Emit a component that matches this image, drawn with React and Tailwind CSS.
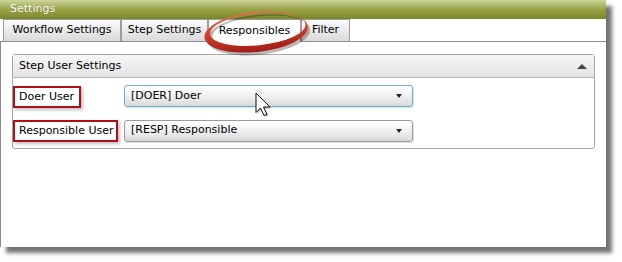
import React from 'react'

const font = { fontFamily: '"DejaVu Sans", Verdana, sans-serif' }

const Tab = ({ label, active, w }) => (
    <div
        className={`h-[22px] flex items-center justify-center border border-[#9c9c9c] border-b-0 text-[11px] text-black ${active ? 'bg-white h-[23px] -mb-px' : 'bg-gradient-to-b from-[#fbfbfb] to-[#dadada]'} ${w}`}
    >
        {label}
    </div>
)

const Select = ({ value, focused }) => (
    <div
        className={`w-[289px] h-[22px] rounded-[3px] border flex items-center justify-between pl-[6px] pr-[10px] bg-gradient-to-b from-white via-[#f1f1f1] to-[#d9d9d9] text-[11px] text-black shadow-[1px_1px_1px_rgba(0,0,0,0.12)] ${focused ? 'border-[#6aaecb]' : 'border-[#9a9aa2]'}`}
    >
        <span>{value}</span>
        <span className="w-0 h-0 border-l-[3.5px] border-r-[3.5px] border-t-[4px] border-l-transparent border-r-transparent border-t-[#222]" />
    </div>
)

const Label = ({ text, w }) => (
    <div className={`h-[22px] ${w} border-2 border-[#b00e14] flex items-center pl-[4px] text-[11px] text-black shadow-[2px_2px_3px_rgba(0,0,0,0.25)]`}>
        {text}
    </div>
)

export default function App() {
    return (
        <div className="w-[622px] h-[262px] bg-white relative overflow-hidden" style={font}>
            {/* Window */}
            <div className="w-[606px] h-[247px] bg-white flex flex-col shadow-[6px_6px_4px_rgba(0,0,0,0.55)]">
                {/* Title bar */}
                <div className="h-[19px] bg-gradient-to-b from-[#cdd59a] via-[#98a346] to-[#7b8728] text-white text-[11px] pl-[10px] flex items-center [text-shadow:0_0_1px_rgba(0,0,0,0.3)]">
                    Settings
                </div>

                {/* Tabs */}
                <div className="h-[23px] flex items-end pl-[3px] border-b border-[#8c8c94] relative z-10">
                    <Tab label="Workflow Settings" w="w-[118px]" />
                    <Tab label="Step Settings" w="w-[87px]" />
                    <Tab label="Responsibles" w="w-[93px]" active />
                    <Tab label="Filter" w="w-[49px]" />
                </div>

                {/* Content */}
                <div className="flex-1 border-l border-[#8a8a94] pt-[12px] pl-[11px] pr-[11px]">
                    <div className="border border-[#a4a4a4] rounded-[3px]">
                        <div className="h-[23px] bg-gradient-to-b from-[#f7f7f7] to-[#e3e3e3] border-b border-[#b4b4b4] flex items-center justify-between pl-[6px] pr-[7px] text-[11px] text-black">
                            <span>Step User Settings</span>
                            <span className="w-0 h-0 border-l-[5px] border-r-[5px] border-b-[5px] border-l-transparent border-r-transparent border-b-[#444]" />
                        </div>
                        <div className="flex flex-col gap-[11px] pt-[6px] pb-[6px]">
                            <div className="flex items-center">
                                <div className="w-[111px] pt-[2px]">
                                    <Label text="Doer User" w="w-[68px]" />
                                </div>
                                <Select value="[DOER] Doer" focused />
                            </div>
                            <div className="flex items-center">
                                <div className="w-[111px] pt-[1px]">
                                    <Label text="Responsible User" w="w-[105px]" />
                                </div>
                                <Select value="[RESP] Responsible" />
                            </div>
                        </div>
                    </div>
                </div>
            </div>

            {/* Red ellipse annotation */}
            <svg className="absolute left-0 top-0 z-20 pointer-events-none" width="622" height="262">
                <defs>
                    <linearGradient id="rg" x1="0" y1="0" x2="0" y2="1">
                        <stop offset="0" stopColor="#e56a50" />
                        <stop offset="0.5" stopColor="#cf3b2c" />
                        <stop offset="1" stopColor="#9e1d18" />
                    </linearGradient>
                </defs>
                <g transform="rotate(-6 256 31)">
                    <path
                        d="M204 32 a52 20 0 1 0 104 0 a52 20 0 1 0 -104 0 Z M210 29.5 a48 16 0 1 1 96 0 a48 16 0 1 1 -96 0 Z"
                        fill="rgba(0,0,0,0.28)"
                        fillRule="evenodd"
                        transform="translate(2 3)"
                    />
                    <path
                        d="M204 32 a52 20 0 1 0 104 0 a52 20 0 1 0 -104 0 Z M210 29.5 a48 16 0 1 1 96 0 a48 16 0 1 1 -96 0 Z"
                        fill="url(#rg)"
                        fillRule="evenodd"
                    />
                </g>
            </svg>

            {/* Mouse cursor */}
            <svg className="absolute left-[255px] top-[92px] z-20" width="20" height="28" viewBox="0 0 20 28">
                <path d="M2.5 2.5 L2.5 22 L7 17.5 L10.5 25 L13.5 23.8 L10 16.5 L16.5 16.5 Z" fill="rgba(0,0,0,0.25)" />
                <path d="M1 1 L1 20.5 L5.5 16 L9 23.5 L12 22.3 L8.5 15 L15 15 Z" fill="white" stroke="#111" strokeWidth="1" strokeLinejoin="round" />
            </svg>
        </div>
    )
}
